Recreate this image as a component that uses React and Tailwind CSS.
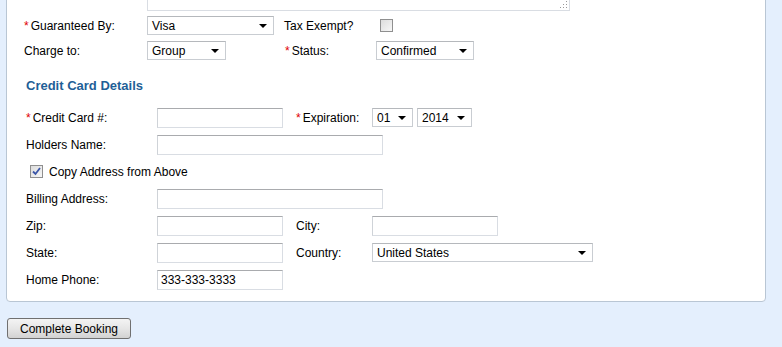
const font = { fontFamily: '"Liberation Sans", Arial, sans-serif' };

function Req() {
  return <span className="text-[#e00000] mr-[2px]">*</span>;
}

function TextBox({ w, value = "" }) {
  return (
    <div
      className={`${w} h-[20px] border border-[#d9dde3] border-t-[#a9abae] border-l-[#cfd3d8] bg-white px-[3px] flex items-center text-[12px] text-black`}
    >
      {value}
    </div>
  );
}

function Select({ w, value }) {
  return (
    <div
      className={`${w} h-[19px] border border-[#c9cdd2] border-t-[#b5b8bc] bg-white pl-[4px] pr-[6px] flex items-center justify-between text-[12px] text-black`}
    >
      <span>{value}</span>
      <span className="w-0 h-0 border-l-[4px] border-r-[4px] border-t-[4px] border-l-transparent border-r-transparent border-t-black" />
    </div>
  );
}

function CheckBox({ checked }) {
  return (
    <div className="w-[13px] h-[13px] border border-[#8f8f8f] bg-gradient-to-br from-[#dcdcdc] to-[#f7f7f7] flex items-center justify-center">
      {checked && (
        <svg width="9" height="9" viewBox="0 0 9 9">
          <path d="M1 4.5 L3.5 7 L8 1" fill="none" stroke="#3b56a8" strokeWidth="1.8" />
        </svg>
      )}
    </div>
  );
}

export default function App() {
  return (
    <div className="w-[782px] h-[347px] bg-[#e4effd] overflow-hidden text-[12px] text-black" style={font}>
      {/*---- Panel ----*/}
      <div className="ml-[6px] w-[760px] -mt-[40px] bg-white border border-[#b9c6d4] rounded-b-[4px] pb-[8px]">
        {/* notes textarea, cut off at the top */}
        <div className="flex pl-[17px] pt-[5px]">
          <div className="w-[123px]" />
          <div className="relative w-[423px] h-[45px] border border-[#d9dde3] border-t-[#a9abae] bg-white">
            <svg className="absolute right-[1px] bottom-[1px]" width="9" height="9" viewBox="0 0 9 9">
              <rect x="7" y="1" width="1" height="1" fill="#999" />
              <rect x="4" y="4" width="1" height="1" fill="#999" />
              <rect x="7" y="4" width="1" height="1" fill="#999" />
              <rect x="1" y="7" width="1" height="1" fill="#999" />
              <rect x="4" y="7" width="1" height="1" fill="#999" />
              <rect x="7" y="7" width="1" height="1" fill="#999" />
            </svg>
          </div>
        </div>

        {/*---- Guarantee ----*/}
        <div className="pl-[17px] pt-[5px]">
          <div className="flex items-center h-[19px]">
            <div className="w-[123px]"><Req />Guaranteed By:</div>
            <div className="w-[137px]"><Select w="w-[127px]" value="Visa" /></div>
            <div className="w-[96px]">Tax Exempt?</div>
            <CheckBox />
          </div>
          <div className="flex items-center h-[19px] mt-[6px]">
            <div className="w-[123px]">Charge to:</div>
            <div className="w-[138px]"><Select w="w-[79px]" value="Group" /></div>
            <div className="w-[91px]"><Req />Status:</div>
            <Select w="w-[98px]" value="Confirmed" />
          </div>
        </div>

        {/*---- Credit Card ----*/}
        <h3 className="ml-[19px] mt-[18px] text-[13px] font-bold text-[#1f5f97] leading-[16px]">
          Credit Card Details
        </h3>

        <div className="pl-[19px] mt-[10px]">
          <div className="flex items-center h-[27px]">
            <div className="w-[131px]"><Req />Credit Card #:</div>
            <div className="w-[139px]"><TextBox w="w-[126px]" /></div>
            <div className="w-[76px]"><Req />Expiration:</div>
            <Select w="w-[41px]" value="01" />
            <div className="w-[4px]" />
            <Select w="w-[55px]" value="2014" />
          </div>
          <div className="flex items-center h-[27px]">
            <div className="w-[131px]">Holders Name:</div>
            <TextBox w="w-[226px]" />
          </div>
          <div className="flex items-center h-[27px] pl-[4px]">
            <CheckBox checked />
            <span className="ml-[6px]">Copy Address from Above</span>
          </div>
          <div className="flex items-center h-[27px]">
            <div className="w-[131px]">Billing Address:</div>
            <TextBox w="w-[226px]" />
          </div>
          <div className="flex items-center h-[27px]">
            <div className="w-[131px]">Zip:</div>
            <div className="w-[139px]"><TextBox w="w-[126px]" /></div>
            <div className="w-[76px]">City:</div>
            <TextBox w="w-[126px]" />
          </div>
          <div className="flex items-center h-[27px]">
            <div className="w-[131px]">State:</div>
            <div className="w-[139px]"><TextBox w="w-[126px]" /></div>
            <div className="w-[76px]">Country:</div>
            <Select w="w-[221px]" value="United States" />
          </div>
          <div className="flex items-center h-[27px]">
            <div className="w-[131px]">Home Phone:</div>
            <TextBox w="w-[126px]" value="333-333-3333" />
          </div>
        </div>
      </div>

      {/*---- Submit ----*/}
      <button className="ml-[7px] mt-[16px] w-[124px] h-[21px] border border-[#707070] rounded-[3px] bg-gradient-to-b from-[#f4f4f4] via-[#e6e6e6] to-[#d2d2d2] text-[12px] text-black">
        Complete Booking
      </button>
    </div>
  );
}
